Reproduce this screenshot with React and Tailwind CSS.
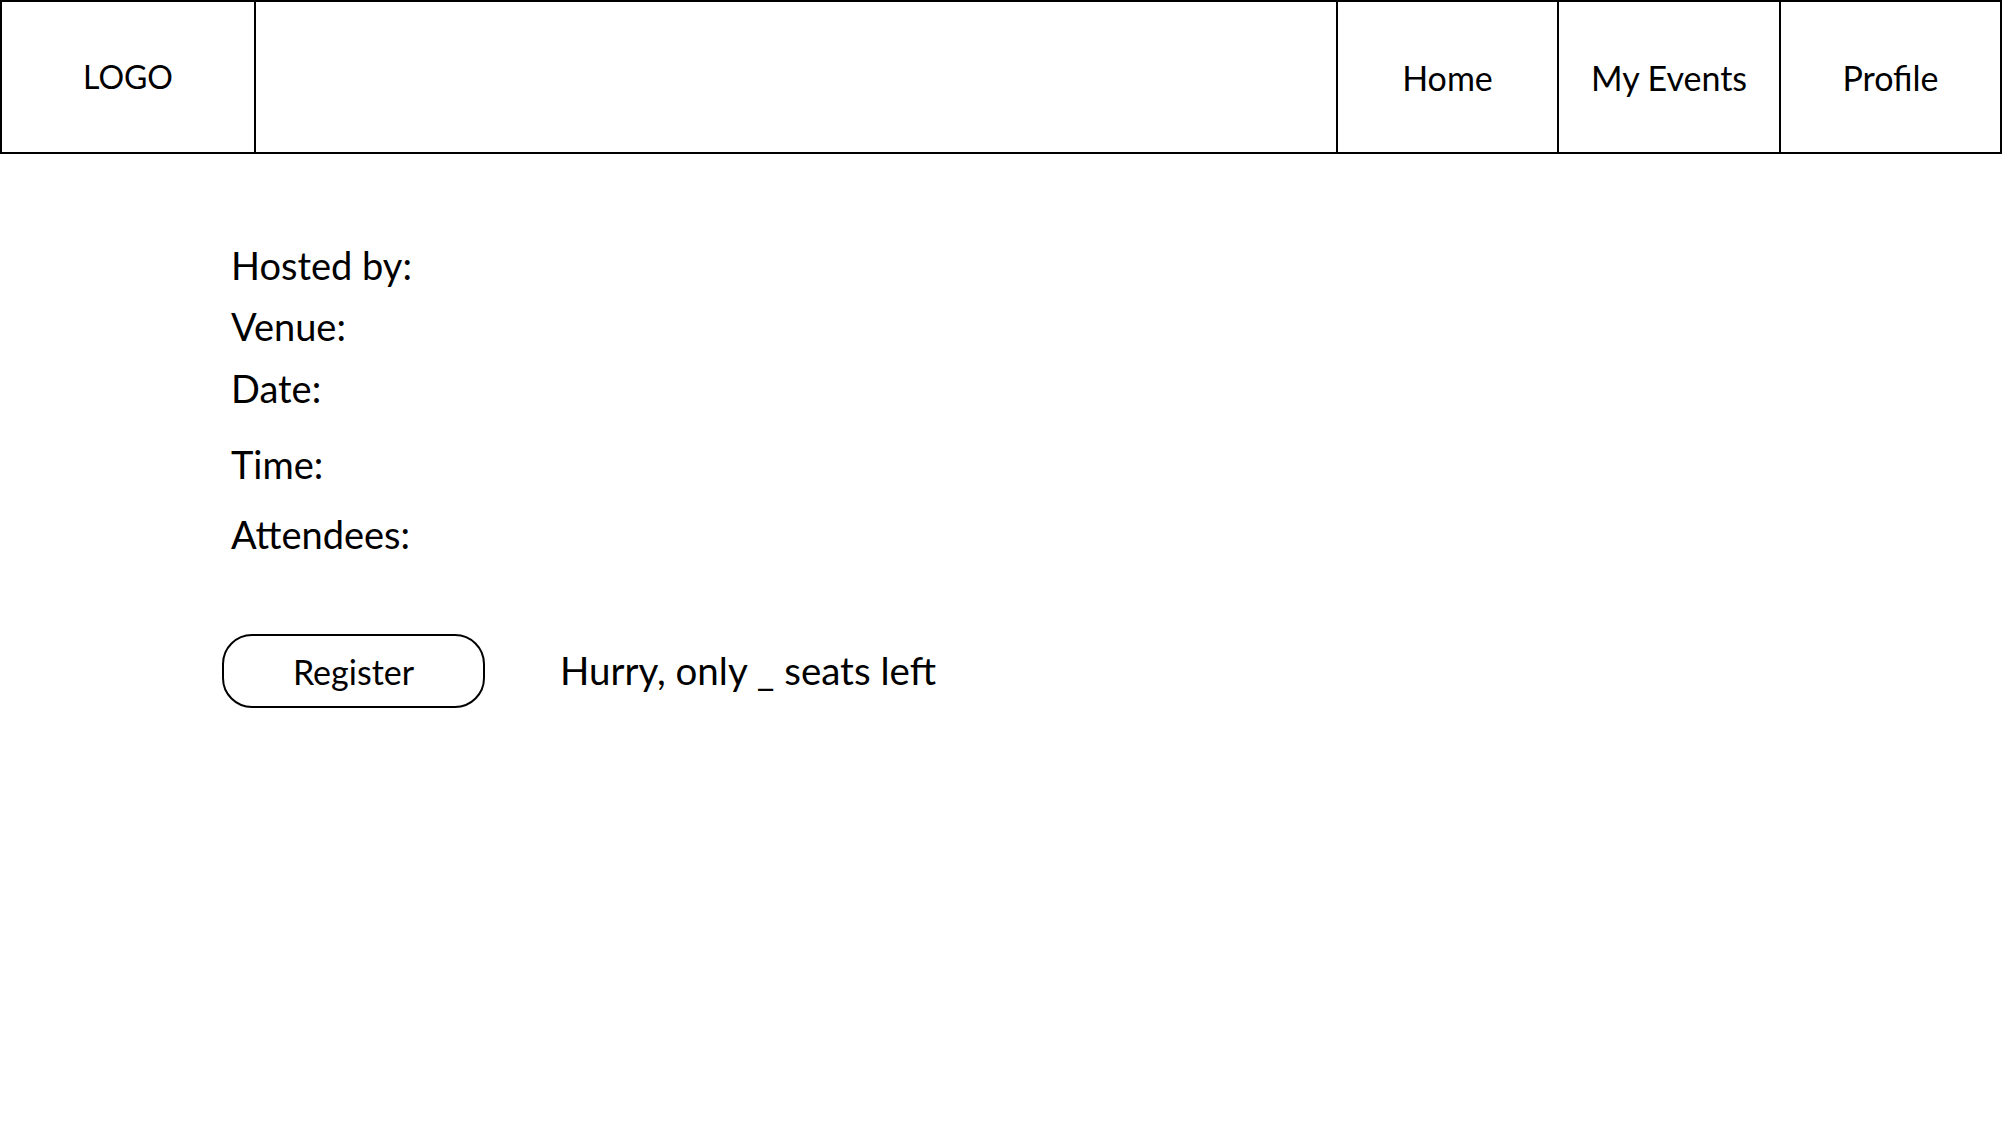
export default function App() {
  const rows = [
    { label: 'Hosted by:', mt: 'mt-[91px]' },
    { label: 'Venue:', mt: 'mt-[21px]' },
    { label: 'Date:', mt: 'mt-[22px]' },
    { label: 'Time:', mt: 'mt-[36px]' },
    { label: 'Attendees:', mt: 'mt-[30px]' },
  ]

  return (
    <div className="w-[2002px] h-[1126px] bg-white text-black font-['Lato',sans-serif]">
      {/* Header */}
      <header className="flex h-[154px] border-2 border-black">
        <div className="w-[254px] border-r-2 border-black flex items-center justify-center text-[32px]">LOGO</div>
        <div className="flex-1" />
        <a className="w-[221px] border-l-2 border-black flex items-center justify-center text-[34px]">Home</a>
        <a className="w-[222px] border-l-2 border-black flex items-center justify-center text-[34px]">My Events</a>
        <a className="w-[221px] border-l-2 border-black flex items-center justify-center text-[34px]">Profile</a>
      </header>

      {/* Event details */}
      <main className="pl-[222px]">
        <div className="pl-[9px]">
          {rows.map(r => (
            <p key={r.label} className={`${r.mt} text-[38px] leading-[40px]`}>{r.label}</p>
          ))}
        </div>

        <div className="flex items-center mt-[80px]">
          <button className="w-[263px] h-[74px] border-2 border-black rounded-[30px] text-[34px] flex items-center justify-center">
            Register
          </button>
          <span className="ml-[75px] text-[38.5px]">Hurry, only _ seats left</span>
        </div>
      </main>
    </div>
  )
}
